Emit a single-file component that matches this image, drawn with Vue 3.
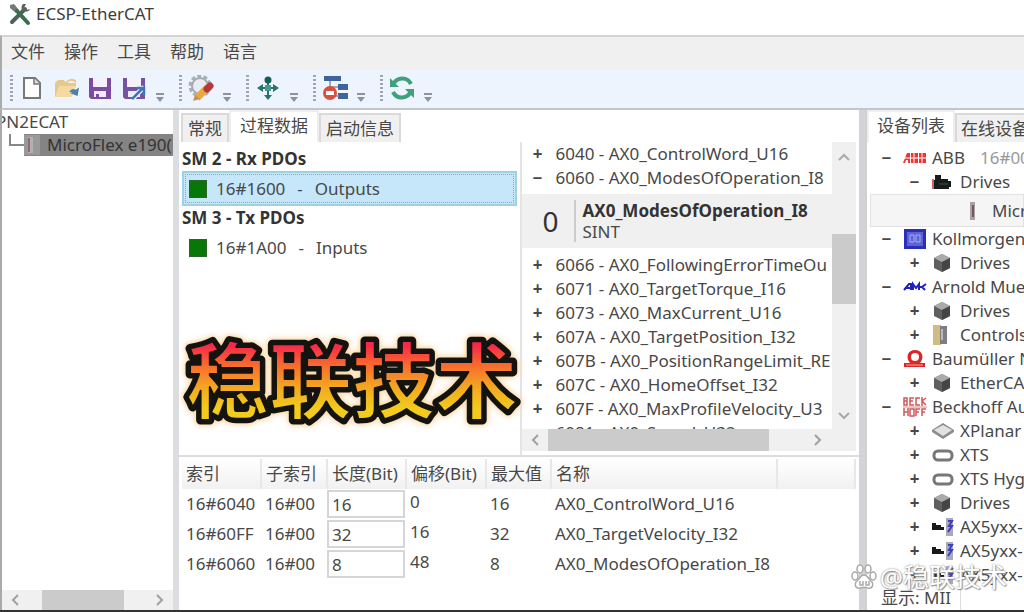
<script setup>
import { ref } from 'vue'

const menus = ['文件', '操作', '工具', '帮助', '语言']
const toolGroups = [['new', 'open', 'save', 'saveas'], ['settings'], ['move'], ['remove'], ['refresh']]
const toolNames = {
  new: '新建', open: '打开', save: '保存', saveas: '另存为',
  settings: '设置', move: '移动', remove: '移除', refresh: '刷新'
}
const tabs = ['常规', '过程数据', '启动信息']
const sideTabs = ['设备列表', '在线设备']

const objectsTop = [
  { sign: '+', text: '6040 - AX0_ControlWord_U16' },
  { sign: '−', text: '6060 - AX0_ModesOfOperation_I8' }
]
const objects = [
  { sign: '+', text: '6066 - AX0_FollowingErrorTimeOu' },
  { sign: '+', text: '6071 - AX0_TargetTorque_I16' },
  { sign: '+', text: '6073 - AX0_MaxCurrent_U16' },
  { sign: '+', text: '607A - AX0_TargetPosition_I32' },
  { sign: '+', text: '607B - AX0_PositionRangeLimit_RE' },
  { sign: '+', text: '607C - AX0_HomeOffset_I32' },
  { sign: '+', text: '607F - AX0_MaxProfileVelocity_U3' },
  { sign: '', text: '6081 - AX0_Speed_U32' }
]

const columns = ['索引', '子索引', '长度(Bit)', '偏移(Bit)', '最大值', '名称', '']
const entries = ref([
  { index: '16#6040', sub: '16#00', length: '16', offset: '0', max: '16', name: 'AX0_ControlWord_U16' },
  { index: '16#60FF', sub: '16#00', length: '32', offset: '16', max: '32', name: 'AX0_TargetVelocity_I32' },
  { index: '16#6060', sub: '16#00', length: '8', offset: '48', max: '8', name: 'AX0_ModesOfOperation_I8' }
])

const devices = [
  { level: 0, sign: '−', icon: 'abb', text: 'ABB', extra: '16#00' },
  { level: 1, sign: '−', icon: 'motor', text: 'Drives' },
  { level: 2, sign: '', icon: 'drive', text: 'Micr', selected: true },
  { level: 0, sign: '−', icon: 'koll', text: 'Kollmorgen' },
  { level: 1, sign: '+', icon: 'cube', text: 'Drives' },
  { level: 0, sign: '−', icon: 'amk', text: 'Arnold Mue' },
  { level: 1, sign: '+', icon: 'cube', text: 'Drives' },
  { level: 1, sign: '+', icon: 'ctrl', text: 'Controls' },
  { level: 0, sign: '−', icon: 'baum', text: 'Baumüller N' },
  { level: 1, sign: '+', icon: 'cube', text: 'EtherCA' },
  { level: 0, sign: '−', icon: 'beck', text: 'Beckhoff Au' },
  { level: 1, sign: '+', icon: 'planar', text: 'XPlanar' },
  { level: 1, sign: '+', icon: 'ring', text: 'XTS' },
  { level: 1, sign: '+', icon: 'ring', text: 'XTS Hyg' },
  { level: 1, sign: '+', icon: 'cube', text: 'Drives' },
  { level: 1, sign: '+', icon: 'axis', text: 'AX5yxx-' },
  { level: 1, sign: '+', icon: 'axis', text: 'AX5yxx-' },
  { level: 1, sign: '+', icon: 'axis', text: 'AX5yxx-' }
]
</script>

<template>
  <div class="window">
    <header class="titlebar">
      <svg class="appicon" viewBox="0 0 24 24" aria-hidden="true">
        <path d="M4 20 17 7" stroke="#52605a" stroke-width="4" stroke-linecap="round" />
        <path d="M15 2c-2 2-2 6 0 7s6 1 7-2l-4 1-2-2 2-4z" fill="#59635f" />
        <path d="M2 3l4-1 5 6-3 3-6-5z" fill="#737b78" />
        <path d="M9 9l11 12" stroke="#36704f" stroke-width="4" stroke-linecap="round" />
      </svg>
      <span>ECSP-EtherCAT</span>
    </header>

    <nav class="menubar">
      <button v-for="m in menus" :key="m" type="button">{{ m }}</button>
    </nav>

    <div class="toolbar">
      <div v-for="(group, gi) in toolGroups" :key="gi" class="group">
        <span class="grip"></span>
        <button v-for="t in group" :key="t" type="button" class="tool" :aria-label="toolNames[t]">
          <svg v-if="t === 'new'" viewBox="0 0 26 26">
            <path d="M5 3h11l5 5v15H5z" fill="#fdfdfd" stroke="#777" stroke-width="2" />
            <path d="M15 3v6h6" fill="#ddd" stroke="#777" stroke-width="1.5" />
          </svg>
          <svg v-else-if="t === 'open'" viewBox="0 0 26 26">
            <path d="M2 21V8l3-3h6l2 3h10v4" fill="#e6c88d" />
            <path d="M2 22 6 11h17l-4 11z" fill="#f4d9a0" />
            <path d="M13 8c3-4 7-4 10-1" stroke="#eac67e" stroke-width="2" fill="none" />
            <path d="M17 17c2-3 5-3 6 0M25 14l-1 6-5-2z" stroke="#497fae" stroke-width="1.5" fill="#497fae" />
          </svg>
          <svg v-else-if="t === 'save'" viewBox="0 0 26 26">
            <path d="M2 3h22v21H4l-2-2z" fill="#7b4ca0" />
            <path d="M6 3h14v9H6z" fill="#f5f1fa" />
            <path d="M7 16h12v6H7z" fill="#f1edf7" />
            <path d="M9 19h3v4H9z" fill="#7b4ca0" />
          </svg>
          <svg v-else-if="t === 'saveas'" viewBox="0 0 26 26">
            <path d="M2 3h22v21H4l-2-2z" fill="#7453a2" />
            <path d="M6 3h14v9H6z" fill="#f5f1fa" />
            <path d="M7 16h12v6H7z" fill="#e9ebf6" />
            <path d="M12 23 23 12" stroke="#f0f5fc" stroke-width="5" />
            <path d="M11 24 22 13M16 13h7v7" stroke="#3e77b5" stroke-width="2.5" fill="none" />
          </svg>
          <svg v-else-if="t === 'settings'" viewBox="0 0 26 26">
            <circle cx="12" cy="11" r="10" fill="none" stroke="#a9afb8" stroke-width="3" stroke-dasharray="4 2.3" />
            <circle cx="12" cy="11" r="8" fill="#e9ecf1" stroke="#a4aab2" stroke-width="2" />
            <path d="M9 23 20 12" stroke="#e9a93f" stroke-width="7" />
            <path d="M5 26l2-6 5 4z" fill="#c98f4c" />
            <path d="m19 14 3-3" stroke="#b6383b" stroke-width="7" stroke-linecap="round" />
          </svg>
          <svg v-else-if="t === 'move'" viewBox="0 0 26 26">
            <path d="M13 5v16M5 13h16" stroke="#25736e" stroke-width="2" />
            <circle cx="13" cy="5" r="3.5" fill="#155f5b" />
            <path d="m2 13 6-4v8zM24 13l-6-4v8zM13 25l-4-5h8z" fill="#25736e" />
            <path d="M10 10h6v6h-6z" fill="#4c9690" />
          </svg>
          <svg v-else-if="t === 'remove'" viewBox="0 0 26 26">
            <path d="M2 1h17v5H2zM16 9h10v6H16zM16 18h10v6H16z" fill="#3d659c" />
            <path d="M8 6v6h8M12 21h5" stroke="#8c8f9c" stroke-width="1.5" fill="none" />
            <circle cx="8" cy="18" r="7" fill="#d9503f" />
            <path d="M4 16h8v4H4z" fill="#fff" />
          </svg>
          <svg v-else viewBox="0 0 26 26">
            <path d="M4 10C7 2 18 1 22 9M22 16c-3 8-14 9-18 1" stroke="#41a07b" stroke-width="4" fill="none" />
            <path d="M1 3v9h9zM25 23v-9h-9z" fill="#41a07b" />
          </svg>
        </button>
        <svg class="more" viewBox="0 0 10 10" aria-hidden="true">
          <path d="M1 0h8v2H1zM1 4h8L5 9z" />
        </svg>
      </div>
    </div>

    <main class="body">
      <aside class="project">
        <div class="tree">
          <div class="root">PN2ECAT</div>
          <div class="child">
            <span class="elbow"></span>
            <span class="node">
              <svg viewBox="0 0 16 20" aria-hidden="true">
                <path d="M0 0h16v20H0z" fill="#999" />
                <path d="M4 2h5v16H4z" fill="#b6aeb0" />
                <path d="M4 3h2v14H4z" fill="#8f6b72" />
              </svg>
              <span>MicroFlex e190(</span>
            </span>
          </div>
        </div>
        <div class="hscroll">
          <svg viewBox="0 0 10 14"><path d="M8 2 3 7l5 5" /></svg>
          <span class="track"><span class="thumb short"></span></span>
          <svg viewBox="0 0 10 14"><path d="m2 2 5 5-5 5" /></svg>
        </div>
      </aside>

      <section class="center">
        <div class="tabs">
          <button v-for="(t, i) in tabs" :key="t" type="button" :class="{ active: i === 1 }">{{ t }}</button>
        </div>

        <div class="upper">
          <div class="pdos">
            <h2>SM 2 - Rx PDOs</h2>
            <div class="pdo selected"><i></i><span>16#1600</span><span>-</span><span>Outputs</span></div>
            <h2>SM 3 - Tx PDOs</h2>
            <div class="pdo"><i></i><span>16#1A00</span><span>-</span><span>Inputs</span></div>
          </div>

          <div class="objects">
            <div class="objrow">
              <div class="objlist">
                <div v-for="o in objectsTop" :key="o.text" class="obj">
                  <button type="button">{{ o.sign }}</button><span>{{ o.text }}</span>
                </div>
                <div class="detail">
                  <span class="sub">0</span>
                  <div class="info"><strong>AX0_ModesOfOperation_I8</strong><span>SINT</span></div>
                </div>
                <div v-for="o in objects" :key="o.text" class="obj">
                  <button type="button">{{ o.sign }}</button><span>{{ o.text }}</span>
                </div>
              </div>
              <div class="vscroll">
                <svg viewBox="0 0 14 10"><path d="m2 8 5-5 5 5" /></svg>
                <span class="vtrack"><span class="vthumb"></span></span>
                <svg viewBox="0 0 14 10"><path d="m2 2 5 5 5-5" /></svg>
              </div>
            </div>
            <div class="hscroll wide">
              <svg viewBox="0 0 10 14"><path d="M8 2 3 7l5 5" /></svg>
              <span class="track"><span class="thumb long"></span></span>
              <svg viewBox="0 0 10 14"><path d="m2 2 5 5-5 5" /></svg>
            </div>
          </div>
        </div>

        <div class="lower">
          <table>
            <colgroup>
              <col class="c1" /><col class="c2" /><col class="c3" /><col class="c4" /><col class="c5" /><col class="c6" /><col />
            </colgroup>
            <thead>
              <tr><th v-for="c in columns" :key="c">{{ c }}</th></tr>
            </thead>
            <tbody>
              <tr v-for="e in entries" :key="e.index">
                <td>{{ e.index }}</td>
                <td>{{ e.sub }}</td>
                <td class="edit"><input v-model="e.length" type="text" :aria-label="e.name + ' 长度'" /></td>
                <td class="offset">{{ e.offset }}</td>
                <td>{{ e.max }}</td>
                <td colspan="2">{{ e.name }}</td>
              </tr>
            </tbody>
          </table>
        </div>
      </section>

      <aside class="devices">
        <div class="tabs">
          <button v-for="(t, i) in sideTabs" :key="t" type="button" :class="{ active: i === 0 }">{{ t }}</button>
        </div>
        <div class="devlist">
          <div v-for="(d, i) in devices" :key="i" class="dev" :class="['l' + d.level, { picked: d.selected }]">
            <button v-if="d.sign" type="button">{{ d.sign }}</button>
            <svg v-if="d.icon === 'abb'" viewBox="0 0 24 20">
              <path d="M0 15 4 5h3v10H5v-3H3l-1 3zM8 5h7v10H8zM16 5h7v10h-7z" fill="#e33" />
              <path d="M0 10h24M11 5v10M19 5v10" stroke="#fff" />
            </svg>
            <svg v-else-if="d.icon === 'motor'" viewBox="0 0 24 20">
              <path d="M2 8h2V3h6v4h7v2h3v6h-2v2H2z" fill="#171d1c" />
              <path d="M1 7h2v10H1z" fill="#c66" />
              <path d="M8 12h9" stroke="#39564b" />
            </svg>
            <svg v-else-if="d.icon === 'drive'" viewBox="0 0 24 20">
              <path d="M7 1h5v18H7z" fill="#a8a1a3" />
              <path d="M10 4v12" stroke="#72595f" stroke-width="2" />
            </svg>
            <svg v-else-if="d.icon === 'koll'" viewBox="0 0 24 20">
              <path d="M1 0h22v20H1z" fill="#2b2fb8" />
              <path d="M4 3h16v14H4z" fill="#5d62d8" />
              <path d="M7 6h4v7H7zM13 6h4v7h-4z" fill="none" stroke="#a9adf2" />
            </svg>
            <svg v-else-if="d.icon === 'cube'" viewBox="0 0 24 20">
              <path d="m11 1 8 4v10l-8 4-8-4V5z" fill="#5f5f5f" />
              <path d="m11 1 8 4-8 4-8-4z" fill="#aaa" />
              <path d="m11 9 8-4v10l-8 4z" fill="#454545" />
            </svg>
            <svg v-else-if="d.icon === 'amk'" viewBox="0 0 24 20">
              <path d="m1 13 5-6h2v6M3 11h5M10 13V7l3 4 3-4v6M17 10h2l4-3M19 10l3 3" stroke="#2022c4" stroke-width="2" fill="none" />
            </svg>
            <svg v-else-if="d.icon === 'ctrl'" viewBox="0 0 24 20">
              <path d="M2 0h8v20H2z" fill="#d0bd84" />
              <path d="M9 1h7v18H9z" fill="#7d7d85" />
              <path d="M11 4v11" stroke="#bbb" stroke-width="2" />
            </svg>
            <svg v-else-if="d.icon === 'baum'" viewBox="0 0 24 20">
              <path d="M1 18h21v-4h-5c5-6 2-13-5-13S2 8 7 14H1z" fill="#de2525" />
              <circle cx="12" cy="8" r="4" fill="#fff" />
              <path d="M3 16h17" stroke="#f7a6a0" />
            </svg>
            <svg v-else-if="d.icon === 'beck'" viewBox="0 0 24 20">
              <g stroke="#d3575b" stroke-width="1.5" fill="none">
                <path d="M1 1h3v7H1zM1 4h3M11 1H7v7h4M7 4h3M17 1h-4v7h4M19 0v9M23 1l-4 3 4 4" />
                <path d="M1 11v8M5 11v8M1 15h4M7 12h4v7H7zM13 19v-7h4M13 15h3M19 19v-7h4M19 15h3" />
              </g>
              <path d="M0 10h24" stroke="#d88" />
            </svg>
            <svg v-else-if="d.icon === 'planar'" viewBox="0 0 24 20">
              <path d="m1 9 11-7 11 7v2l-11 7-11-7z" fill="#8d8d8d" />
              <path d="m3 9 9-5 9 5-9 6z" fill="#e2e2e2" />
            </svg>
            <svg v-else-if="d.icon === 'ring'" viewBox="0 0 24 20">
              <rect x="3" y="6" width="18" height="9" rx="4" fill="#fff" stroke="#777" stroke-width="3" />
            </svg>
            <svg v-else viewBox="0 0 24 20">
              <path d="M1 6h4v2h5v2h3v3H1z" fill="#17181b" />
              <path d="M15 1h7v18h-7z" fill="#aab" />
              <path d="M17 4h4l-3 5h3l-4 6" stroke="#3b3fc0" stroke-width="2" fill="none" />
            </svg>
            <span>{{ d.text }}</span>
            <span v-if="d.extra" class="extra">{{ d.extra }}</span>
          </div>
        </div>
        <div class="status">显示: MII</div>
      </aside>
    </main>

    <svg class="banner" viewBox="0 0 360 120" role="img" aria-label="稳联技术">
      <defs>
        <linearGradient id="fire" gradientUnits="userSpaceOnUse" x1="0" y1="24" x2="0" y2="98">
          <stop offset="0" stop-color="#f8264a" />
          <stop offset="0.25" stop-color="#f8662f" />
          <stop offset="0.55" stop-color="#f3a421" />
          <stop offset="0.85" stop-color="#f2cb1c" />
        </linearGradient>
      </defs>
      <text x="15" y="91" class="edge" aria-hidden="true">稳联技术</text>
      <text x="15" y="91" class="face">稳联技术</text>
    </svg>

    <div class="watermark">
      <svg viewBox="0 0 26 26" aria-hidden="true">
        <g fill="#fff" stroke="#aaa" stroke-width="1.5">
          <ellipse cx="4" cy="12" rx="3" ry="4" />
          <ellipse cx="9" cy="5" rx="3" ry="4" />
          <ellipse cx="17" cy="5" rx="3" ry="4" />
          <ellipse cx="22" cy="12" rx="3" ry="4" />
          <path d="M13 11c4 0 5 5 8 7 2 3 0 7-4 6-3-1-5-1-8 0-4 1-6-3-4-6 3-2 4-7 8-7z" />
          <path d="M9 17v4h3v-4M15 17v4h3v-4" fill="none" />
        </g>
      </svg>
      <span>@稳联技术</span>
    </div>
  </div>
</template>

<style>
html,
body {
  margin: 0;
  background: #fff;
}
</style>

<style scoped>
* {
  box-sizing: border-box;
}

.window {
  position: relative;
  display: flex;
  flex-direction: column;
  height: 100vh;
  overflow: hidden;
  border-bottom: 2px solid #333;
  background: #fff;
  color: #484848;
  font: 17px/24px "Noto Sans", "Noto Sans CJK SC", sans-serif;
  white-space: nowrap;
}

button {
  flex: none;
  margin: 0;
  padding: 0;
  border: 0;
  background: none;
  color: inherit;
  font: inherit;
}

svg {
  display: block;
  flex: none;
}

.titlebar {
  display: flex;
  align-items: center;
  gap: 4px;
  height: 35px;
  padding: 0 8px 8px;
  color: #3c3c3c;
}

.appicon {
  width: 24px;
  height: 24px;
  fill: none;
}

.menubar {
  display: flex;
  align-items: center;
  gap: 19px;
  height: 34px;
  padding: 0 9px 2px;
  border-top: 2px solid #d4d4d4;
  border-left: 2px solid #aaa;
  background: #f0f0f0;
}

.toolbar {
  display: flex;
  align-items: center;
  gap: 14px;
  height: 41px;
  padding: 0 8px 2px;
  border-bottom: 2px solid #c2c6cc;
  border-left: 2px solid #aaa;
  background: #edf4fd;
}

.group {
  display: flex;
  align-items: center;
  gap: 8px;
}

.grip {
  width: 3px;
  height: 26px;
  margin-right: -2px;
  background: repeating-linear-gradient(#a2a5ad 0 2px, transparent 2px 4px);
}

.tool svg {
  width: 26px;
  height: 26px;
}

.more {
  width: 10px;
  height: 10px;
  margin-top: 20px;
  fill: #8f9299;
}

.body {
  display: flex;
  flex: 1;
  min-height: 0;
  border-left: 2px solid #aaa;
}

.project {
  display: flex;
  flex: 0 0 171px;
  flex-direction: column;
  overflow: hidden;
}

.tree {
  flex: 1;
}

.root {
  height: 24px;
  margin-left: -6px;
}

.child {
  display: flex;
  height: 22px;
  padding-left: 7px;
}

.elbow {
  width: 15px;
  height: 12px;
  border-bottom: 2px solid #888;
  border-left: 2px solid #888;
}

.node {
  display: flex;
  flex: 1;
  align-items: center;
  gap: 7px;
  background: #848484;
  color: #333;
}

.node svg {
  width: 16px;
  height: 20px;
}

.hscroll {
  display: flex;
  align-items: center;
  gap: 8px;
  height: 20px;
  padding: 0 8px;
  background: #f0f0f0;
}

.hscroll svg {
  width: 10px;
  height: 14px;
  fill: none;
  stroke: #a0a0a0;
  stroke-width: 2;
}

.track {
  flex: 1;
  height: 100%;
}

.thumb {
  display: block;
  height: 100%;
  background: #cbcbcb;
}

.short {
  width: 69%;
  margin-left: 12%;
}

.long {
  width: 86%;
}

.center {
  display: flex;
  flex: 1;
  flex-direction: column;
  min-width: 0;
  border: solid #d2d4d8;
  border-width: 0 6px;
  border-left-color: #dcdde0;
}

.tabs {
  display: flex;
  align-items: flex-end;
  height: 32px;
}

.tabs button {
  height: 29px;
  padding: 0 5px;
  border: 2px solid #d9d9d9;
  border-bottom: 0;
  background: #f0f0f0;
}

.center .tabs {
  padding-left: 2px;
}

.tabs .active {
  height: 32px;
  padding: 0 9px 2px;
  border-color: #eee;
  background: #fff;
}

.upper {
  display: flex;
  flex: 1;
  min-height: 0;
  padding-right: 3px;
}

.pdos {
  flex: 1;
  padding: 5px 3px;
  border-right: 2px solid #e4e4e4;
}

h2 {
  margin: 0;
  color: #333;
  font-size: 17px;
  line-height: 24px;
}

.pdo {
  display: flex;
  align-items: center;
  gap: 12px;
  height: 35px;
  padding: 0 5px;
  border: 2px solid transparent;
}

.pdo i {
  width: 18px;
  height: 18px;
  margin-right: -3px;
  border: 1px solid #2c632c;
  background: #077807;
}

.selected {
  border-color: #9ed0e6;
  outline: 1px dotted #75aec6;
  outline-offset: -4px;
  background: #c5e7f9;
}

.objects {
  display: flex;
  flex: 1;
  flex-direction: column;
  min-width: 0;
  margin-bottom: 4px;
}

.objrow {
  display: flex;
  flex: 1;
  min-height: 0;
}

.objlist {
  flex: 1;
  overflow: hidden;
}

.obj {
  display: flex;
  padding-left: 10px;
}

.obj button {
  width: 24px;
  padding-right: 12px;
  font-weight: 700;
}

.detail {
  display: flex;
  align-items: center;
  height: 54px;
  margin: 4px 0 5px;
  padding-left: 21px;
  background: #f0f0f0;
}

.sub {
  width: 31px;
  color: #333;
  font-size: 28px;
}

.info {
  display: flex;
  flex-direction: column;
  padding-left: 7px;
  border-left: 2px solid #ccc;
  line-height: 21px;
}

.info strong {
  color: #333;
  font-size: 17px;
}

.vscroll {
  display: flex;
  flex-direction: column;
  align-items: center;
  width: 24px;
  padding: 10px 0 8px;
  background: #f0f0f0;
}

.vscroll svg {
  width: 14px;
  height: 10px;
  fill: none;
  stroke: #aaa;
  stroke-width: 2;
}

.vtrack {
  display: flex;
  flex: 1;
  flex-direction: column;
  width: 100%;
}

.vthumb {
  height: 28%;
  margin-top: 72px;
  background: #cbcbcb;
}

.wide {
  height: 22px;
  padding-right: 33px;
}

.lower {
  height: 155px;
  padding: 2px 3px 0;
  border-top: 2px solid #ddd;
}

table {
  width: 100%;
  border-collapse: collapse;
  table-layout: fixed;
}

th {
  height: 30px;
  padding: 0 4px;
  border-right: 2px solid #e8e8e8;
  background: linear-gradient(#fff, #f1f1f1);
  font-weight: 400;
  text-align: left;
}

td {
  height: 30px;
  padding: 0 4px;
}

.c1 { width: 79px; }
.c2 { width: 66px; }
.c3 { width: 79px; }
.c4 { width: 80px; }
.c5 { width: 65px; }
.c6 { width: 226px; }

.edit {
  padding: 0;
}

input {
  display: block;
  width: 78px;
  height: 28px;
  padding: 0 3px;
  border: 2px solid #d6d6d6;
  background: #fff;
  color: inherit;
  font: inherit;
}

.offset {
  padding-bottom: 4px;
}

.devices {
  display: flex;
  flex: 0 0 159px;
  flex-direction: column;
  overflow: hidden;
  border-left: 2px solid #d0d0d0;
}

.devices .tabs button {
  padding-right: 8px;
  padding-left: 8px;
}

.devices .tabs button:last-child {
  padding-left: 4px;
}

.devlist {
  flex: 1;
  min-height: 0;
  padding: 4px 0 0 3px;
  overflow: hidden;
}

.dev {
  display: flex;
  align-items: center;
  height: 24px;
  padding-left: 10px;
}

.dev button {
  width: 23px;
  padding-right: 10px;
  font-weight: 700;
}

.dev svg {
  width: 24px;
  height: 20px;
  margin-right: 5px;
}

.l1 {
  padding-left: 38px;
}

.picked {
  height: 33px;
  padding-left: 92px;
  border: 1px solid #e2e2e2;
  background: #f5f5f5;
}

.extra {
  margin-left: 15px;
  color: #999;
}

.status {
  width: 94px;
  height: 24px;
  padding-left: 14px;
  border-right: 1px solid #ddd;
}

.banner {
  position: absolute;
  top: 321px;
  left: 171px;
  width: 360px;
  height: 120px;
}

.banner text {
  font: 700 83px "Noto Sans CJK SC", sans-serif;
  stroke: #15130f;
  stroke-linejoin: round;
}

.edge {
  fill: #15130f;
  stroke-width: 9px;
  filter: drop-shadow(0 0 2px #f9d7a4) drop-shadow(0 0 3px #fbdcae);
}

.face {
  fill: url(#fire);
  stroke-width: 2px;
}

.watermark {
  position: absolute;
  right: 17px;
  bottom: 18px;
  display: flex;
  align-items: center;
  gap: 3px;
  color: #fff;
  font-size: 26px;
  line-height: 30px;
  text-shadow: 0 0 2px #777, 1px 1px 1px #999;
}

.watermark svg {
  width: 26px;
  height: 26px;
}
</style>
